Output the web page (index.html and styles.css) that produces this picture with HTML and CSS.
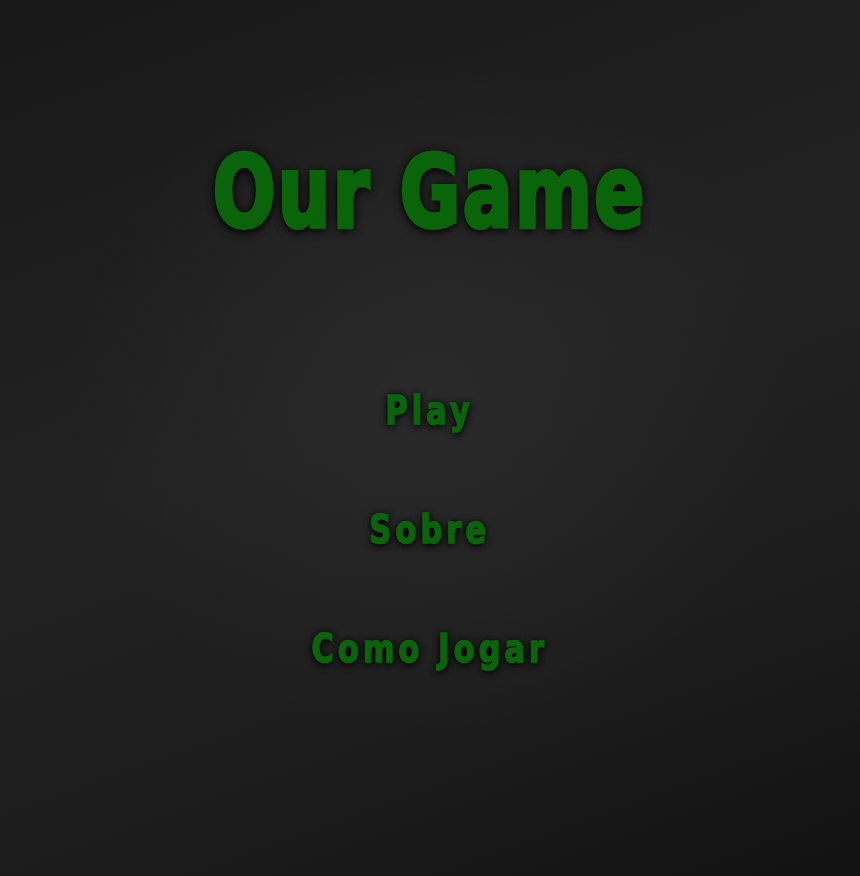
FILE: index.html
```html
<!DOCTYPE html>
<html lang="pt">
<head>
<meta charset="utf-8">
<title>Our Game</title>
<link rel="stylesheet" href="styles.css">
</head>
<body>
<main class="screen">
  <h1 class="title">Our Game</h1>
  <nav class="menu">
    <a class="menu-item" href="#">Play</a>
    <a class="menu-item" href="#">Sobre</a>
    <a class="menu-item" href="#">Como Jogar</a>
  </nav>
</main>
</body>
</html>
```
FILE: styles.css
```css
html, body {
  margin: 0;
  padding: 0;
  height: 100%;
}
body {
  background:
    radial-gradient(ellipse 60% 55% at 50% 45%, rgba(42,42,42,0.9) 0%, rgba(40,40,40,0) 70%),
    linear-gradient(160deg, #181818 0%, #222222 45%, #1c1c1c 75%, #121212 100%);
  font-family: "DejaVu Sans Condensed", "Liberation Sans", sans-serif;
  overflow: hidden;
}
.screen {
  height: 876px;
  display: flex;
  flex-direction: column;
  align-items: center;
}
.title {
  margin: 138px 0 0;
  font-size: 100px;
  font-weight: 700;
  line-height: 110px;
  letter-spacing: 3px;
  color: #0a650a;
  -webkit-text-stroke: 4px #0a650a;
  transform: scale(0.82, 1.0);
  text-shadow: 0 0 12px rgba(0,0,0,0.9), 0 4px 10px rgba(0,0,0,0.8);
}
.menu {
  margin-top: 142px;
  display: flex;
  flex-direction: column;
  align-items: center;
  gap: 79px;
}
.menu-item {
  font-size: 40px;
  line-height: 40px;
  font-weight: 700;
  letter-spacing: 5px;
  color: #0a650a;
  -webkit-text-stroke: 1.5px #0a650a;
  text-decoration: none;
  transform: scale(0.84, 0.98);
  text-shadow: 0 0 8px rgba(0,0,0,0.9), 0 3px 8px rgba(0,0,0,0.8);
}
```
